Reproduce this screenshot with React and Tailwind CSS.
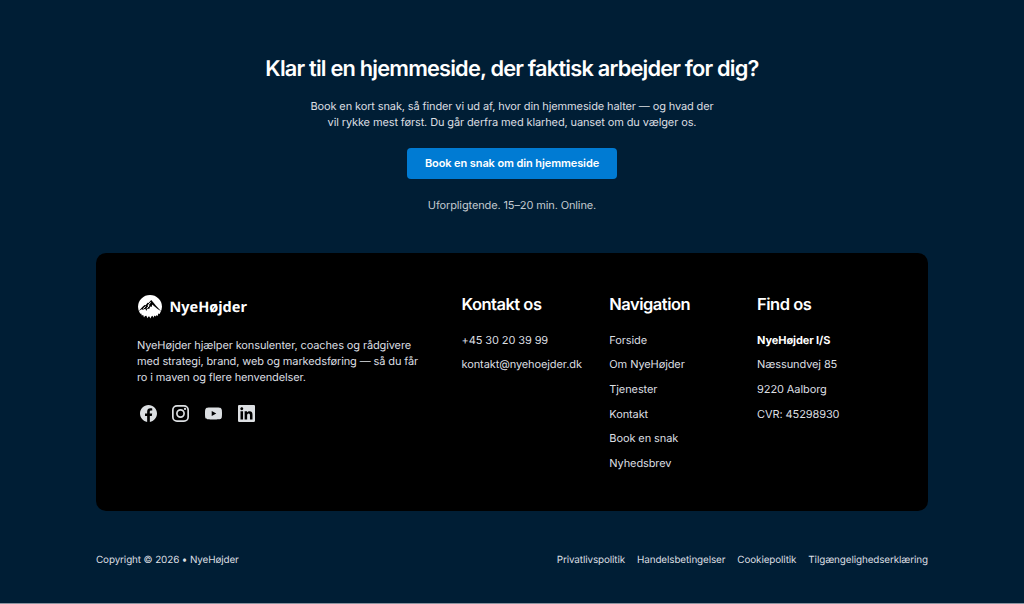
import React from 'react';

const contactLinks = ['+45 30 20 39 99', 'kontakt@nyehoejder.dk'];

const navLinks = ['Forside', 'Om NyeHøjder', 'Tjenester', 'Kontakt', 'Book en snak', 'Nyhedsbrev'];

const addressLines = ['Næssundvej 85', '9220 Aalborg', 'CVR: 45298930'];

const legalLinks = ['Privatlivspolitik', 'Handelsbetingelser', 'Cookiepolitik', 'Tilgængelighedserklæring'];

function Logo() {
  return (
    <svg viewBox="0 0 26 26" className="w-[26px] h-[26px] shrink-0" fill="none">
      {/* Disc with a ragged tree line along the bottom */}
      <path
        fill="#fff"
        d="M1 12.7A12 11.7 0 0 1 25 12.7Q25 16.5 22.6 20L21.4 19.4 20.6 22 19.4 21.2 18.4 22.6 17.2 21.4 16.6 23.8 15.4 21.8 14.4 22.4 13.4 24.6 12.4 22.4 11.4 22.6 10.4 24.2 9.4 21.8 8 22 7 23.6 6.2 21 4.8 21.4 4.2 19.4 3.2 19.8Q1 16.500 1 12.700Z"
      />
      {/* Mountain */}
      <path
        fill="#000"
        d="M1.600 17L5.600 12.800 7.600 11 8.600 11.200 10.600 8.800 11.600 9 14.200 6 16.400 8.600 19 11.800 24.200 17.200 20.600 15 17.600 12.600 15.200 10.400 14.600 13 13.200 12.400 12.200 15 10.600 14.600 9.200 17 8.400 14.800 5.800 15.800 4.800 15.200Z"
      />
      <path stroke="#fff" strokeWidth="1" d="M13.600 8.400L11 11.400 12.200 11.800 9.600 14.200M8.600 12.400L6.200 14.600" />
    </svg>
  );
}

function FacebookIcon() {
  return (
    <svg viewBox="2 2 20 20" className="w-[17px] h-[17px]" fill="currentColor">
      <path d="M12 2C6.5 2 2 6.5 2 12c0 5 3.7 9.1 8.4 9.9v-7H7.9V12h2.5V9.8c0-2.5 1.5-3.9 3.8-3.9 1.1 0 2.2.2 2.2.2v2.5h-1.3c-1.2 0-1.6.8-1.6 1.6V12h2.8l-.4 2.9h-2.3v7C18.3 21.1 22 17 22 12c0-5.5-4.5-10-10-10z" />
    </svg>
  );
}

function InstagramIcon() {
  return (
    <svg viewBox="3 3 18 18" className="w-[17px] h-[17px]" fill="none" stroke="currentColor" strokeWidth="1.8">
      <rect x="3.9" y="3.9" width="16.2" height="16.2" rx="4.4" />
      <circle cx="12" cy="12" r="3.8" />
      <circle cx="16.8" cy="7.2" r="1.2" fill="currentColor" stroke="none" />
    </svg>
  );
}

function YoutubeIcon() {
  return (
    <svg viewBox="2 2 20 20" className="w-[17px] h-[17px]" fill="currentColor">
      <path d="M21.8 8s-.2-1.4-.8-2c-.8-.8-1.6-.8-2-.8C16.2 5 12 5 12 5s-4.2 0-7 .2c-.4 0-1.2 0-2 .8-.6.6-.8 2-.8 2S2 9.6 2 11.2v1.6c0 1.6.2 3.2.2 3.2s.2 1.4.8 2c.8.8 1.8.8 2.2.8 1.6.2 6.8.2 6.8.2s4.2 0 7-.2c.4 0 1.2 0 2-.8.6-.6.8-2 .8-2s.2-1.6.2-3.2v-1.6c0-1.6-.2-3.2-.2-3.2zM9.9 14.9V9.1l5.4 2.9-5.4 2.9z" />
    </svg>
  );
}

function LinkedinIcon() {
  return (
    <svg viewBox="3 3 18 18" className="w-[17px] h-[17px]" fill="currentColor">
      <path d="M19.7,3H4.3C3.582,3,3,3.582,3,4.3v15.4C3,20.418,3.582,21,4.3,21h15.4c0.718,0,1.3-0.582,1.3-1.3V4.3C21,3.582,20.418,3,19.7,3z M8.339,18.338H5.667v-8.59h2.672V18.338z M7.004,8.574c-0.857,0-1.549-0.694-1.549-1.548c0-0.855,0.691-1.548,1.549-1.548c0.854,0,1.547,0.694,1.547,1.548C8.551,7.881,7.858,8.574,7.004,8.574z M18.339,18.338h-2.669v-4.177c0-0.996-0.017-2.278-1.387-2.278c-1.389,0-1.601,1.086-1.601,2.206v4.249h-2.667v-8.59h2.559v1.174h0.037c0.356-0.675,1.227-1.387,2.526-1.387c2.703,0,3.203,1.779,3.203,4.092V18.338z" />
    </svg>
  );
}

const socials = [
  { name: 'Facebook', icon: FacebookIcon },
  { name: 'Instagram', icon: InstagramIcon },
  { name: 'YouTube', icon: YoutubeIcon },
  { name: 'LinkedIn', icon: LinkedinIcon },
];

function FooterColumn({ title, children }) {
  return (
    <div>
      <h3 className="text-[16.5px] leading-5 font-[580] tracking-[-0.5px] text-white mb-[17.6px]">{title}</h3>
      <ul className="flex flex-col gap-[8.6px] text-[11px] leading-4 tracking-[-0.1px] whitespace-nowrap">{children}</ul>
    </div>
  );
}

export default function App() {
  return (
    <div className="h-[604px] overflow-hidden bg-[#8b94a0] font-['Inter',sans-serif] tracking-[-0.12px] text-[#dcdfe2] [text-rendering:geometricPrecision]">
      <div className="h-[603px] bg-[#001e35] flex flex-col">
        {/* Call to action */}
        <section className="flex flex-col items-center text-center pt-[55px]">
          <h2 className="text-[21.8px] leading-7 font-[560] tracking-[-0.8px] text-white whitespace-nowrap">
            Klar til en hjemmeside, der faktisk arbejder for dig?
          </h2>
          <p className="mt-[16.4px] text-[11px] leading-[15.4px] whitespace-nowrap">
            Book en kort snak, så finder vi ud af, hvor din hjemmeside halter — og hvad der
            <br />
            vil rykke mest først. Du går derfra med klarhed, uanset om du vælger os.
          </p>
          <button className="mt-[18px] w-[210px] h-[31px] rounded-[4px] bg-[#007bd3] text-white text-[11px] font-[580] tracking-[-0.1px]">
            Book en snak om din hjemmeside
          </button>
          <p className="mt-[18px] text-[11px] leading-4 text-[#c3cad0]">Uforpligtende. 15–20 min. Online.</p>
        </section>

        {/* Footer card */}
        <footer className="mt-10 mx-24 h-[258px] rounded-[10px] bg-black pl-[41px] pt-[41px] grid grid-cols-[324.5px_147.8px_147.8px_1fr]">
          <div>
            <div className="flex items-center gap-[7px] -ml-[0.5px]">
              <Logo />
              <span className="-mt-px font-['Noto_Sans',sans-serif] text-[14.5px] leading-5 font-bold tracking-normal text-white">
                NyeHøjder
              </span>
            </div>
            <p className="mt-[18.2px] text-[11px] leading-[15.6px] whitespace-nowrap">
              NyeHøjder hjælper konsulenter, coaches og rådgivere
              <br />
              med strategi, brand, web og markedsføring — så du får
              <br />
              ro i maven og flere henvendelser.
            </p>
            <div className="mt-5 ml-[2.5px] flex gap-[15.8px]">
              {socials.map((social) => (
                <a key={social.name} aria-label={social.name}>
                  <social.icon />
                </a>
              ))}
            </div>
          </div>

          <FooterColumn title="Kontakt os">
            {contactLinks.map((link) => (
              <li key={link}>{link}</li>
            ))}
          </FooterColumn>

          <FooterColumn title="Navigation">
            {navLinks.map((link) => (
              <li key={link}>{link}</li>
            ))}
          </FooterColumn>

          <FooterColumn title="Find os">
            <li className="font-bold text-white">NyeHøjder I/S</li>
            {addressLines.map((line) => (
              <li key={line}>{line}</li>
            ))}
          </FooterColumn>
        </footer>

        {/* Bottom bar */}
        <div className="mt-[40.4px] mx-24 flex justify-between text-[9.9px] leading-4 tracking-[-0.11px] whitespace-nowrap">
          <p>Copyright © 2026 • NyeHøjder</p>
          <nav className="flex gap-3">
            {legalLinks.map((link) => (
              <a key={link}>{link}</a>
            ))}
          </nav>
        </div>
      </div>
    </div>
  );
}
